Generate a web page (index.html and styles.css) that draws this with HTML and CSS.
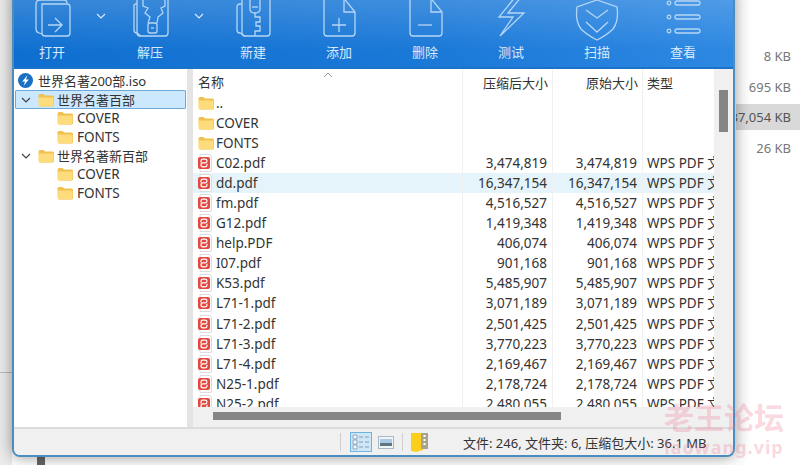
FILE: index.html
```html
<!DOCTYPE html>
<html lang="zh">
  <head>
    <meta charset="UTF-8" />
    <title>世界名著200部.iso</title>
    <link rel="stylesheet" href="styles.css">
  </head>
  <body>
    <svg class="defs" width="0" height="0">
      <symbol id="folder" viewBox="0 0 16 14">
        <path d="M0.5 2.500q0-1.500 1.500-1.500h3.500l1.500 1.500h7.500q1.500 0 1.500 1.500v8q0 1.500-1.500 1.500h-12q-1.500 0-1.500-1.500z" fill="#f0c14f"/>
        <path d="M0.500 4.500h15v7.500q0 1.500-1.500 1.500h-12q-1.500 0-1.500-1.500z" fill="#fcdc7c"/>
      </symbol>
      <symbol id="pdf" viewBox="0 0 14 18">
        <path d="M2 .5h9q2.500 0 2.500 2.500v13q0 1.500-1.500 1.500h-10z" fill="#fff" stroke="#dcdcdc"/>
        <rect x="0" y="3" width="12" height="12" rx="2" fill="#e2483f"/>
        <path d="M3 8.500V7q0-1.800 1.800-1.800h2.400Q9 5.200 9 7t-1.800 1.800H4.800Q3 8.800 3 10.800t1.800 2h2.400q1.800 0 1.800-1.800V9.800" fill="none" stroke="#fff" stroke-width="1.200"/>
      </symbol>
      <symbol id="chev" viewBox="0 0 10 6">
        <path d="M1 1l4 4 4-4" fill="none" stroke="currentColor" stroke-width="1.200"/>
      </symbol>
    </svg>

    <div class="sizes">
      <div class="size">8 KB</div>
      <div class="size">695 KB</div>
      <div class="size size-hl"><span>37,054 KB</span></div>
      <div class="size">26 KB</div>
    </div>
    <div class="back-line"></div>
    <div class="back-bar"></div>

    <div class="window">
      <div class="toolbar">
        <div class="tool tool-first">
          <svg class="tool-icon" viewBox="0 0 44 48">
            <path d="M12 8h25q3 0 3 3v26q0 3-3 3H15q-3 0-3-3z" />
            <path d="M12 38l-3-1q-3-1-3-4V8q0-4 4-4h24q3 0 3 3" />
            <path d="M18 29h14M25 22l7 7-7 7" />
          </svg>
          <span>打开</span>
        </div>
        <svg class="tool-chev"><use href="#chev" /></svg>
        <div class="tool tool-first">
          <svg class="tool-icon" viewBox="0 0 44 48">
            <path d="M9 8H8Q6 8 6 10v24q0 3 3 3l4 3" />
            <path d="M9 0v37q0 3 3 3h25q3 0 3-3V0" />
            <path d="M15 0v10l5 2-3 5 5 4-2 6M37 0v10l-4 2 2 5-5 4-1 6" />
            <rect x="20" y="27" width="9" height="10" rx="2" />
            <path d="M23 32h3" />
          </svg>
          <span>解压</span>
        </div>
        <svg class="tool-chev"><use href="#chev" /></svg>
        <div class="tool">
          <svg class="tool-icon" viewBox="0 0 44 48">
            <path d="M11 8H9q-3 0-3 3v23q0 3 3 3l5 3" />
            <path d="M11 0v37q0 3 3 3h22q3 0 3-3V0" />
            <path d="M19 0v13q0 4 5 4t5-4V0" />
            <path d="M21 11h6" />
            <path d="M24 17v4h5v5h-4v4h4v5h-5v5" />
          </svg>
          <span>新建</span>
        </div>
        <div class="tool">
          <svg class="tool-icon" viewBox="0 0 44 48">
            <path d="M7 0v37q0 3 3 3h25q3 0 3-3V16L25 0" />
            <path d="M27 0v16h11" />
            <path d="M15 29h14M22 22v14" />
          </svg>
          <span>添加</span>
        </div>
        <div class="tool">
          <svg class="tool-icon" viewBox="0 0 44 48">
            <path d="M7 0v37q0 3 3 3h26q3 0 3-3V16L26 0" />
            <path d="M28 0v16h11" />
            <path d="M15 29h14" />
          </svg>
          <span>删除</span>
        </div>
        <div class="tool">
          <svg class="tool-icon" viewBox="0 0 44 48">
            <path d="M27 0L10 21h14L11 40l24-23H19L33 0" />
          </svg>
          <span>测试</span>
        </div>
        <div class="tool">
          <svg class="tool-icon" viewBox="0 0 44 48">
            <path d="M22 4l20 7q2 14-4 22-6 6-16 11-10-5-16-11-6-8-4-22z" />
            <path d="M11 14l11 8 11-8M11 26l11 10 11-10" />
          </svg>
          <span>扫描</span>
        </div>
        <div class="tool">
          <svg class="tool-icon" viewBox="0 0 44 48">
            <circle cx="8" cy="7" r="1.800" />
            <circle cx="8" cy="21" r="1.800" />
            <circle cx="8" cy="35" r="1.800" />
            <rect x="14" y="5" width="25" height="4" rx="2" />
            <rect x="14" y="19" width="25" height="4" rx="2" />
            <rect x="14" y="33" width="25" height="4" rx="2" />
          </svg>
          <span>查看</span>
        </div>
      </div>

      <div class="panes">
        <div class="tree">
          <div class="node node-cn">
            <svg class="iso" viewBox="0 0 16 16">
              <circle cx="8" cy="8" r="8" fill="#1a6fc4" />
              <path d="M10 2.500L4.500 9h3L6 13.500 11.500 7h-3z" fill="#fff" />
            </svg>
            <span>世界名著200部.iso</span>
          </div>
          <div class="node node-cn node-sel">
            <svg class="arrow"><use href="#chev" /></svg>
            <svg class="folder"><use href="#folder" /></svg>
            <span>世界名著百部</span>
          </div>
          <div class="node node-child">
            <svg class="folder"><use href="#folder" /></svg>
            <span>COVER</span>
          </div>
          <div class="node node-child">
            <svg class="folder"><use href="#folder" /></svg>
            <span>FONTS</span>
          </div>
          <div class="node node-cn">
            <svg class="arrow"><use href="#chev" /></svg>
            <svg class="folder"><use href="#folder" /></svg>
            <span>世界名著新百部</span>
          </div>
          <div class="node node-child">
            <svg class="folder"><use href="#folder" /></svg>
            <span>COVER</span>
          </div>
          <div class="node node-child">
            <svg class="folder"><use href="#folder" /></svg>
            <span>FONTS</span>
          </div>
        </div>
        <div class="splitter"></div>
        <div class="list">
          <div class="files">
            <div class="row row-head">
              <div class="c-name">名称<svg class="sort" viewBox="0 0 10 5"><path d="M1 5l4-4 4 4" /></svg></div>
              <div class="c-num">压缩后大小</div>
              <div class="c-num">原始大小</div>
              <div class="c-type">类型</div>
            </div>
            <div class="row"><div class="c-name"><svg class="folder"><use href="#folder" /></svg>..</div><div class="c-num"></div><div class="c-num"></div><div class="c-type"></div></div>
            <div class="row"><div class="c-name"><svg class="folder"><use href="#folder" /></svg>COVER</div><div class="c-num"></div><div class="c-num"></div><div class="c-type"></div></div>
            <div class="row"><div class="c-name"><svg class="folder"><use href="#folder" /></svg>FONTS</div><div class="c-num"></div><div class="c-num"></div><div class="c-type"></div></div>
            <div class="row"><div class="c-name"><svg class="pdf"><use href="#pdf" /></svg>C02.pdf</div><div class="c-num">3,474,819</div><div class="c-num">3,474,819</div><div class="c-type">WPS PDF 文档</div></div>
            <div class="row row-sel"><div class="c-name"><svg class="pdf"><use href="#pdf" /></svg>dd.pdf</div><div class="c-num">16,347,154</div><div class="c-num">16,347,154</div><div class="c-type">WPS PDF 文档</div></div>
            <div class="row"><div class="c-name"><svg class="pdf"><use href="#pdf" /></svg>fm.pdf</div><div class="c-num">4,516,527</div><div class="c-num">4,516,527</div><div class="c-type">WPS PDF 文档</div></div>
            <div class="row"><div class="c-name"><svg class="pdf"><use href="#pdf" /></svg>G12.pdf</div><div class="c-num">1,419,348</div><div class="c-num">1,419,348</div><div class="c-type">WPS PDF 文档</div></div>
            <div class="row"><div class="c-name"><svg class="pdf"><use href="#pdf" /></svg>help.PDF</div><div class="c-num">406,074</div><div class="c-num">406,074</div><div class="c-type">WPS PDF 文档</div></div>
            <div class="row"><div class="c-name"><svg class="pdf"><use href="#pdf" /></svg>I07.pdf</div><div class="c-num">901,168</div><div class="c-num">901,168</div><div class="c-type">WPS PDF 文档</div></div>
            <div class="row"><div class="c-name"><svg class="pdf"><use href="#pdf" /></svg>K53.pdf</div><div class="c-num">5,485,907</div><div class="c-num">5,485,907</div><div class="c-type">WPS PDF 文档</div></div>
            <div class="row"><div class="c-name"><svg class="pdf"><use href="#pdf" /></svg>L71-1.pdf</div><div class="c-num">3,071,189</div><div class="c-num">3,071,189</div><div class="c-type">WPS PDF 文档</div></div>
            <div class="row"><div class="c-name"><svg class="pdf"><use href="#pdf" /></svg>L71-2.pdf</div><div class="c-num">2,501,425</div><div class="c-num">2,501,425</div><div class="c-type">WPS PDF 文档</div></div>
            <div class="row"><div class="c-name"><svg class="pdf"><use href="#pdf" /></svg>L71-3.pdf</div><div class="c-num">3,770,223</div><div class="c-num">3,770,223</div><div class="c-type">WPS PDF 文档</div></div>
            <div class="row"><div class="c-name"><svg class="pdf"><use href="#pdf" /></svg>L71-4.pdf</div><div class="c-num">2,169,467</div><div class="c-num">2,169,467</div><div class="c-type">WPS PDF 文档</div></div>
            <div class="row"><div class="c-name"><svg class="pdf"><use href="#pdf" /></svg>N25-1.pdf</div><div class="c-num">2,178,724</div><div class="c-num">2,178,724</div><div class="c-type">WPS PDF 文档</div></div>
            <div class="row"><div class="c-name"><svg class="pdf"><use href="#pdf" /></svg>N25-2.pdf</div><div class="c-num">2,480,055</div><div class="c-num">2,480,055</div><div class="c-type">WPS PDF 文档</div></div>
          </div>
          <div class="vscroll"><div class="vthumb"></div></div>
          <div class="hscroll"><div class="hthumb"></div></div>
        </div>
      </div>

      <div class="status">
        <div class="status-sep"></div>
        <div class="view-btn view-btn-on">
          <svg viewBox="0 0 20 18" width="20" height="18">
            <path d="M2 2h4v4H2zM2 7h4v4H2zM2 12h4v4H2z" fill="#f4f8fb" stroke="#8aa7bd" />
            <path d="M8 4h4M14 4h4M8 9h4M14 9h4M8 14h4M14 14h4" stroke="#7f9db5" />
          </svg>
        </div>
        <div class="view-btn view-btn-small">
          <svg viewBox="0 0 16 13" width="16" height="13">
            <rect x=".5" y=".5" width="15" height="12" fill="#f2f5f8" stroke="#a9b8c4" />
            <rect x="2" y="3" width="12" height="4" fill="#a9cbe8" />
            <rect x="2" y="7" width="12" height="3" fill="#5f7683" />
          </svg>
        </div>
        <div class="status-sep status-sep-2"></div>
        <svg class="archive" viewBox="0 0 18 20" width="18" height="20">
          <path d="M0 1h9l3 1v16l-7 2-5-1z" fill="#fbcf1c" />
          <rect x="10" y="1" width="7" height="16" fill="#a8a38c" />
          <path d="M12.500 3h2v2h-2zM12.500 7h2v2h-2zM12.500 11h2v2h-2z" fill="#fff" />
        </svg>
        <div class="status-text">文件: 246, 文件夹: 6, 压缩包大小: 36.1 MB</div>
      </div>
    </div>

    <div class="mark">
      <div class="mark-cn">老王论坛</div>
      <div class="mark-en">laowang.vip</div>
    </div>
  </body>
</html>
```

FILE: styles.css
```css
* {
  box-sizing: border-box;
}
html,
body {
  height: 100%;
}
body {
  margin: 0;
  overflow: hidden;
  background: linear-gradient(90deg, #ececec 12px, #fff 12px);
  font-family: "Noto Sans", "Noto Sans CJK SC", sans-serif;
  font-size: 13.5px;
  color: #333;
  position: relative;
}
.defs {
  position: absolute;
}

/* things behind the window */
.sizes {
  position: absolute;
  left: 736px;
  top: 41px;
  width: 64px;
  color: #777;
  font-size: 13px;
}
.size {
  height: 30.700px;
  line-height: 30px;
  text-align: right;
  padding-right: 9px;
  white-space: nowrap;
}
.size-hl {
  height: 26px;
  margin: 2px 0 3px;
  line-height: 26px;
  display: flex;
  justify-content: flex-end;
  overflow: hidden;
  background: #d9d9d9;
  color: #555;
}
.size-hl span {
  flex: none;
}
.back-line {
  position: absolute;
  left: 0;
  top: 372px;
  width: 14px;
  height: 1px;
  background: #bbb;
}
.back-bar {
  position: absolute;
  left: 37px;
  top: 450px;
  width: 8px;
  height: 15px;
  background: #666;
}

.window {
  position: absolute;
  left: 12px;
  top: -12px;
  width: 723px;
  height: 469px;
  display: flex;
  flex-direction: column;
  background: #f0f0f0;
  border: 2px solid #4a8dbe;
  border-top: 0;
  border-radius: 0 0 8px 8px;
  box-shadow: 0 0 16px rgba(0, 0, 0, 0.42);
  overflow: hidden;
}

.toolbar {
  height: 81px;
  flex: none;
  display: flex;
  background: linear-gradient(180deg, rgba(255, 255, 255, 0.2), rgba(255, 255, 255, 0) 80%),
    linear-gradient(90deg, #0f6fd0, #1b79d8 60%, #2d88e2);
  border-bottom: 2px solid #1a72c9;
}
.tool {
  width: 86px;
  flex: none;
  display: flex;
  flex-direction: column;
  align-items: center;
  color: #d8e9fb;
  font-size: 13px;
}
.tool-first {
  width: 76px;
}
.tool-icon {
  width: 44px;
  height: 48px;
  flex: none;
  margin: 8px 0 -2px;
  fill: none;
  stroke: #b5d6f5;
  stroke-width: 1.300;
}
.tool span {
  line-height: 20px;
}
.tool-chev {
  width: 10px;
  height: 6px;
  flex: none;
  margin: 25px 6px 0;
  color: #d8e9fb;
}

.panes {
  flex: 1;
  min-height: 0;
  display: flex;
}
.tree {
  width: 173px;
  flex: none;
  background: #fff;
  padding: 2.500px 1px 0 1px;
}
.node {
  height: 18.700px;
  display: flex;
  align-items: center;
  padding-left: 3px;
  white-space: nowrap;
}
.node-cn {
  font-size: 13px;
}
.node-cn .folder {
  margin-right: 3px;
}
.node-sel {
  background: #cce8ff;
  border: 1px solid #6da9d8;
  padding-left: 2px;
  border-radius: 1px;
}
.node-child {
  padding-left: 42px;
}
.iso {
  width: 15px;
  height: 15px;
  margin-right: 5px;
}
.arrow {
  width: 10px;
  height: 6px;
  margin: 0 7px 0 3px;
  color: #444;
}
.folder {
  width: 16px;
  height: 14px;
  flex: none;
  margin-right: 4px;
}
.splitter {
  width: 6px;
  flex: none;
  background: #e4e4e4;
}

.list {
  flex: 1;
  min-width: 0;
  display: grid;
  grid-template-columns: 1fr 19px;
  grid-template-rows: 1fr 20px;
  background: #fff;
}
.files {
  overflow: hidden;
}
.row {
  height: 20.050px;
  display: grid;
  grid-template-columns: 269px 90px 90px 72px;
  white-space: nowrap;
}
.row > div {
  overflow: hidden;
  line-height: 20px;
}
.row-head {
  height: 24px;
  font-size: 13px;
}
.row-head > div {
  line-height: 24px;
  height: 24px;
  padding-top: 2px;
}
.row-head .c-num {
  padding-right: 4px;
}
.row-sel {
  background: #e5f3fb;
}
.c-name {
  display: flex;
  align-items: center;
  padding-left: 5px;
  position: relative;
}
.c-name .folder {
  margin-right: 2px;
}
.c-num {
  text-align: right;
  padding-right: 5px;
  border-left: 1px solid #f0f0f0;
}
.c-type {
  padding-left: 4px;
  border-left: 1px solid #f0f0f0;
}
.pdf {
  width: 14px;
  height: 18px;
  flex: none;
  margin-right: 4px;
}
.sort {
  position: absolute;
  left: 130px;
  top: 3px;
  width: 10px;
  height: 5px;
  fill: none;
  stroke: #999;
}
.vscroll {
  background: #f0f0f0;
  padding: 21px 5px 0;
}
.vthumb {
  height: 42px;
  background: #858585;
}
.hscroll {
  grid-column: 1 / 3;
  background: #f0f0f0;
  padding: 5px 0 0 20px;
}
.hthumb {
  width: 348px;
  height: 8px;
  background: #858585;
}

.status {
  height: 28px;
  flex: none;
  display: flex;
  align-items: center;
  padding-left: 326px;
  background: #f0f0f0;
  border-top: 2px solid #dcdcdc;
}
.status-sep {
  width: 1px;
  height: 18px;
  background: #cfcfcf;
  margin-right: 9px;
}
.status-sep-2 {
  margin: 0 8px 0 2px;
}
.view-btn {
  width: 22px;
  height: 20px;
  display: flex;
  align-items: center;
  justify-content: center;
  margin-right: 5px;
}
.view-btn-small {
  width: 18px;
}
.view-btn-on {
  background: #cfe6f7;
  border: 1px solid #6fb3e0;
}
.status-text {
  margin-left: 34px;
  font-size: 13px;
  white-space: nowrap;
}

.mark {
  position: absolute;
  left: 664px;
  top: 400px;
  color: rgba(240, 120, 145, 0.3);
  font-weight: 700;
  text-align: center;
  white-space: nowrap;
}
.mark-cn {
  font-size: 30px;
  line-height: 36px;
}
.mark-en {
  font-size: 18px;
  line-height: 22px;
  letter-spacing: 1px;
}
```
